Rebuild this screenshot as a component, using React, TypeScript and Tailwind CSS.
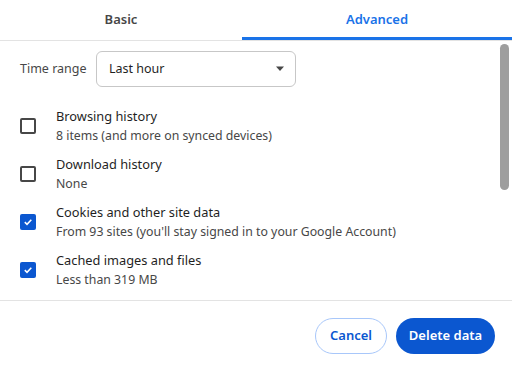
import { useState } from "react"

interface Item {
  title: string
  sub: string
  checked: boolean
}

const items: Item[] = [
  { title: "Browsing history", sub: "8 items (and more on synced devices)", checked: false },
  { title: "Download history", sub: "None", checked: false },
  { title: "Cookies and other site data", sub: "From 93 sites (you'll stay signed in to your Google Account)", checked: true },
  { title: "Cached images and files", sub: "Less than 319 MB", checked: true },
]

function Box({ checked }: { checked: boolean }) {
  if (checked) {
    return (
      <div className="w-[16px] h-[16px] rounded-[2px] bg-[#0b57d0] flex items-center justify-center">
        <svg width="10" height="10" viewBox="0 0 10 10">
          <path d="M1.8 5.2 L4 7.3 L8.3 2.8" stroke="white" strokeWidth="1.6" fill="none" />
        </svg>
      </div>
    )
  }
  return <div className="w-[16px] h-[16px] rounded-[2px] border-2 border-[#474747]" />
}

export default function App() {
  const [tab, setTab] = useState<string>("Advanced")

  return (
    <div className="w-[512px] h-[371px] bg-white flex flex-col text-[#1f1f1f] font-['Noto_Sans',sans-serif]">
      <div className="flex h-[41px] border-b border-[#e3e3e3]">
        <button
          onClick={() => setTab("Basic")}
          className={
            tab === "Basic"
              ? "w-[242px] flex items-center justify-center text-[13px] font-semibold text-[#1a73e8] border-b-[3px] border-[#1a73e8] pt-[3px]"
              : "w-[242px] flex items-center justify-center text-[13px] font-semibold text-[#474747] border-b-[3px] border-transparent pt-[3px]"
          }
        >
          Basic
        </button>
        <button
          onClick={() => setTab("Advanced")}
          className={
            tab === "Advanced"
              ? "flex-1 flex items-center justify-center text-[13px] font-semibold text-[#1a73e8] border-b-[3px] border-[#1a73e8] pt-[3px]"
              : "flex-1 flex items-center justify-center text-[13px] font-semibold text-[#474747] border-b-[3px] border-transparent pt-[3px]"
          }
        >
          Advanced
        </button>
      </div>

      <div className="flex h-[260px] border-b border-[#e3e3e3]">
        <div className="flex-1 pl-[20px] pt-[10px]">
          <div className="flex items-center h-[36px]">
            <span className="text-[12.5px] text-[#474747] w-[76px]">Time range</span>
            <div className="w-[200px] h-[36px] rounded-[6px] border border-[#c7c7c7] flex items-center justify-between pl-[12px] pr-[10px]">
              <span className="text-[12.5px] text-[#1f1f1f]">Last hour</span>
              <svg width="10" height="6" viewBox="0 0 10 6">
                <path d="M1 0.5 H9 L5 5 Z" fill="#474747" />
              </svg>
            </div>
          </div>

          <div className="flex flex-col mt-[19px] gap-[8px]">
            {items.map((it) => (
              <div key={it.title} className="flex items-center h-[40px]">
                <div className="w-[36px] flex items-center">
                  <Box checked={it.checked} />
                </div>
                <div className="flex flex-col leading-[19px]">
                  <span className="text-[12.8px] text-[#1f1f1f]">{it.title}</span>
                  <span className="text-[12.3px] text-[#474747]">{it.sub}</span>
                </div>
              </div>
            ))}
          </div>
        </div>
        <div className="w-[12px] pt-[3px] flex justify-start">
          <div className="w-[9px] h-[146px] rounded-full bg-[#9e9e9e]" />
        </div>
      </div>

      <div className="flex-1 flex items-start justify-end gap-[9px] pr-[17px] pt-[17px]">
        <button className="h-[36px] w-[72px] rounded-full border border-[#a8c7fa] text-[13px] font-semibold text-[#0b57d0]">
          Cancel
        </button>
        <button className="h-[36px] w-[99px] rounded-full bg-[#0b57d0] text-[13px] font-semibold text-white">
          Delete data
        </button>
      </div>
    </div>
  )
}
